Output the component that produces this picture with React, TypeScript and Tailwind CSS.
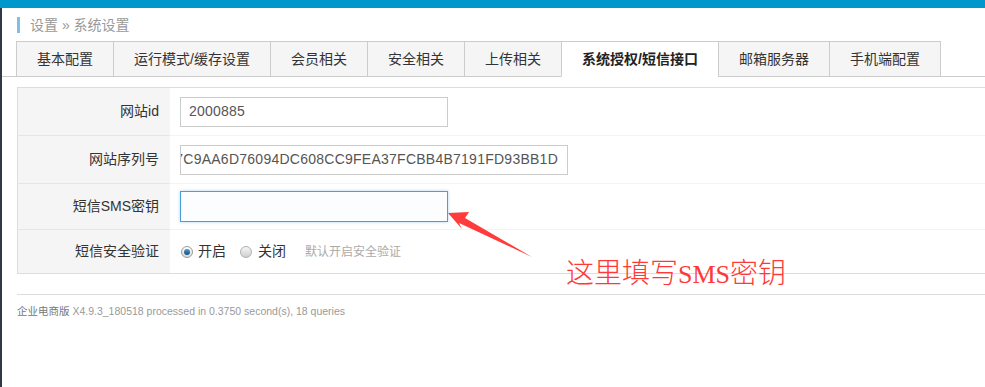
import React from "react"

const tabs = [
  { label: "基本配置", w: "w-[97px]" },
  { label: "运行模式/缓存设置", w: "w-[157px]" },
  { label: "会员相关", w: "w-[97px]" },
  { label: "安全相关", w: "w-[97px]" },
  { label: "上传相关", w: "w-[97px]" },
  { label: "系统授权/短信接口", w: "w-[157px]", active: true },
  { label: "邮箱服务器", w: "w-[111px]" },
  { label: "手机端配置", w: "w-[112px]", last: true },
]

function Radio({ checked }: { checked?: boolean }) {
  if (checked) {
    return (
      <span className="flex h-[12px] w-[12px] items-center justify-center rounded-full border border-[#9a9a9a] bg-gradient-to-b from-white to-[#d8d8d8]">
        <span className="block h-[6px] w-[6px] rounded-full bg-gradient-to-b from-[#4c9bd1] to-[#15507f]" />
      </span>
    )
  }
  return (
    <span className="block h-[12px] w-[12px] rounded-full border border-[#b0b0b0] bg-gradient-to-b from-[#f6f6f6] to-[#cfcfcf]" />
  )
}

function Row({
  label,
  h,
  first,
  children,
}: {
  label: string
  h: string
  first?: boolean
  children: React.ReactNode
}) {
  return (
    <div className={`flex ${h}`}>
      <div
        className={`flex w-[152px] items-center justify-end bg-[#f5f5f5] pr-[11px] text-[14px] text-[#333] ${
          first ? "" : "border-t border-[#e6e6e6]"
        }`}
      >
        {label}
      </div>
      <div className={`flex flex-1 items-center pl-[10px] ${first ? "" : "border-t border-[#f3f3f3]"}`}>{children}</div>
    </div>
  )
}

export default function App() {
  return (
    <div
      className="relative h-[387px] w-[985px] overflow-hidden bg-white"
      style={{ fontFamily: '"Liberation Sans", "Noto Sans CJK SC", sans-serif' }}
    >
      <div className="h-2 bg-[#0098cc]" />
      <div className="flex h-[379px]">
        <div className="w-[2px] bg-[#2f3a46]" />
        <div className="min-w-0 flex-1">
          {/* breadcrumb */}
          <div className="ml-[15px] mt-[9px] flex h-[16px] items-center">
            <span className="h-[16px] w-[3px] bg-[#7ec1e2]" />
            <span className="ml-[10px] text-[14px] leading-none text-[#999]">设置 » 系统设置</span>
          </div>

          {/* tabs */}
          <div className="mt-[8px] flex items-start border-b border-[#ccc] pl-[14px]">
            {tabs.map((t) => (
              <div
                key={t.label}
                className={`-mb-px flex h-[36px] items-center justify-center border-l border-t border-[#ccc] text-[14px] ${t.w} ${
                  t.last ? "border-r" : ""
                } ${t.active ? "border-b border-b-white bg-white font-bold text-[#222]" : "border-b bg-[#f5f5f5] text-[#333]"}`}
              >
                {t.label}
              </div>
            ))}
          </div>

          {/* form */}
          <div className="ml-[15px] mt-[10px] w-[1000px] border border-r-0 border-[#ddd]">
            <Row label="网站id" h="h-[47px]" first>
              <div className="flex h-[30px] w-[268px] items-center border border-[#ccc] pl-[8px] text-[14px] tracking-[0.2px] text-[#555]">
                2000885
              </div>
            </Row>
            <Row label="网站序列号" h="h-[48px]">
              <div className="flex h-[30px] w-[388px] items-center justify-end overflow-hidden whitespace-nowrap border border-[#ccc] pr-[9px] text-[14px] tracking-[0.25px] text-[#555]">
                <span className="shrink-0">7C9AA6D76094DC608CC9FEA37FCBB4B7191FD93BB1D</span>
              </div>
            </Row>
            <Row label="短信SMS密钥" h="h-[46px]">
              <div className="h-[31px] w-[268px] border border-[#47a0dd] bg-[#fbfdff] shadow-[0_0_3px_rgba(71,160,221,0.45)]" />
            </Row>
            <Row label="短信安全验证" h="h-[44px]">
              <div className="flex items-center text-[14px] text-[#333]">
                <span className="ml-px">
                  <Radio checked />
                </span>
                <span className="ml-[5px]">开启</span>
                <span className="ml-[14px]">
                  <Radio />
                </span>
                <span className="ml-[6px]">关闭</span>
                <span className="ml-[19px] text-[12px] text-[#aaa]">默认开启安全验证</span>
              </div>
            </Row>
          </div>

          {/* footer */}
          <div className="ml-[15px] mt-[20px] border-t border-[#ddd] pt-[10px] text-[10.5px] leading-[12px] text-[#999]">
            <span className="text-[#777]">企业电商版</span> X4.9.3_180518 processed in 0.3750 second(s), 18 queries
          </div>
        </div>
      </div>

      {/* annotation */}
      <svg className="pointer-events-none absolute left-0 top-0" width="985" height="387">
        <polygon points="448,213 469,212 465,218 532,257 459,223 462,229" fill="#ff3b3b" />
      </svg>
      <div
        className="pointer-events-none absolute left-[566px] top-[253px] text-[28px] font-extralight leading-[36px] text-[#ff3838]"
        style={{ fontFamily: '"Noto Sans CJK SC", serif' }}
      >
        这里填写<span className="text-[26px]" style={{ fontFamily: '"Liberation Serif", serif' }}>SMS</span>密钥
      </div>
    </div>
  )
}
